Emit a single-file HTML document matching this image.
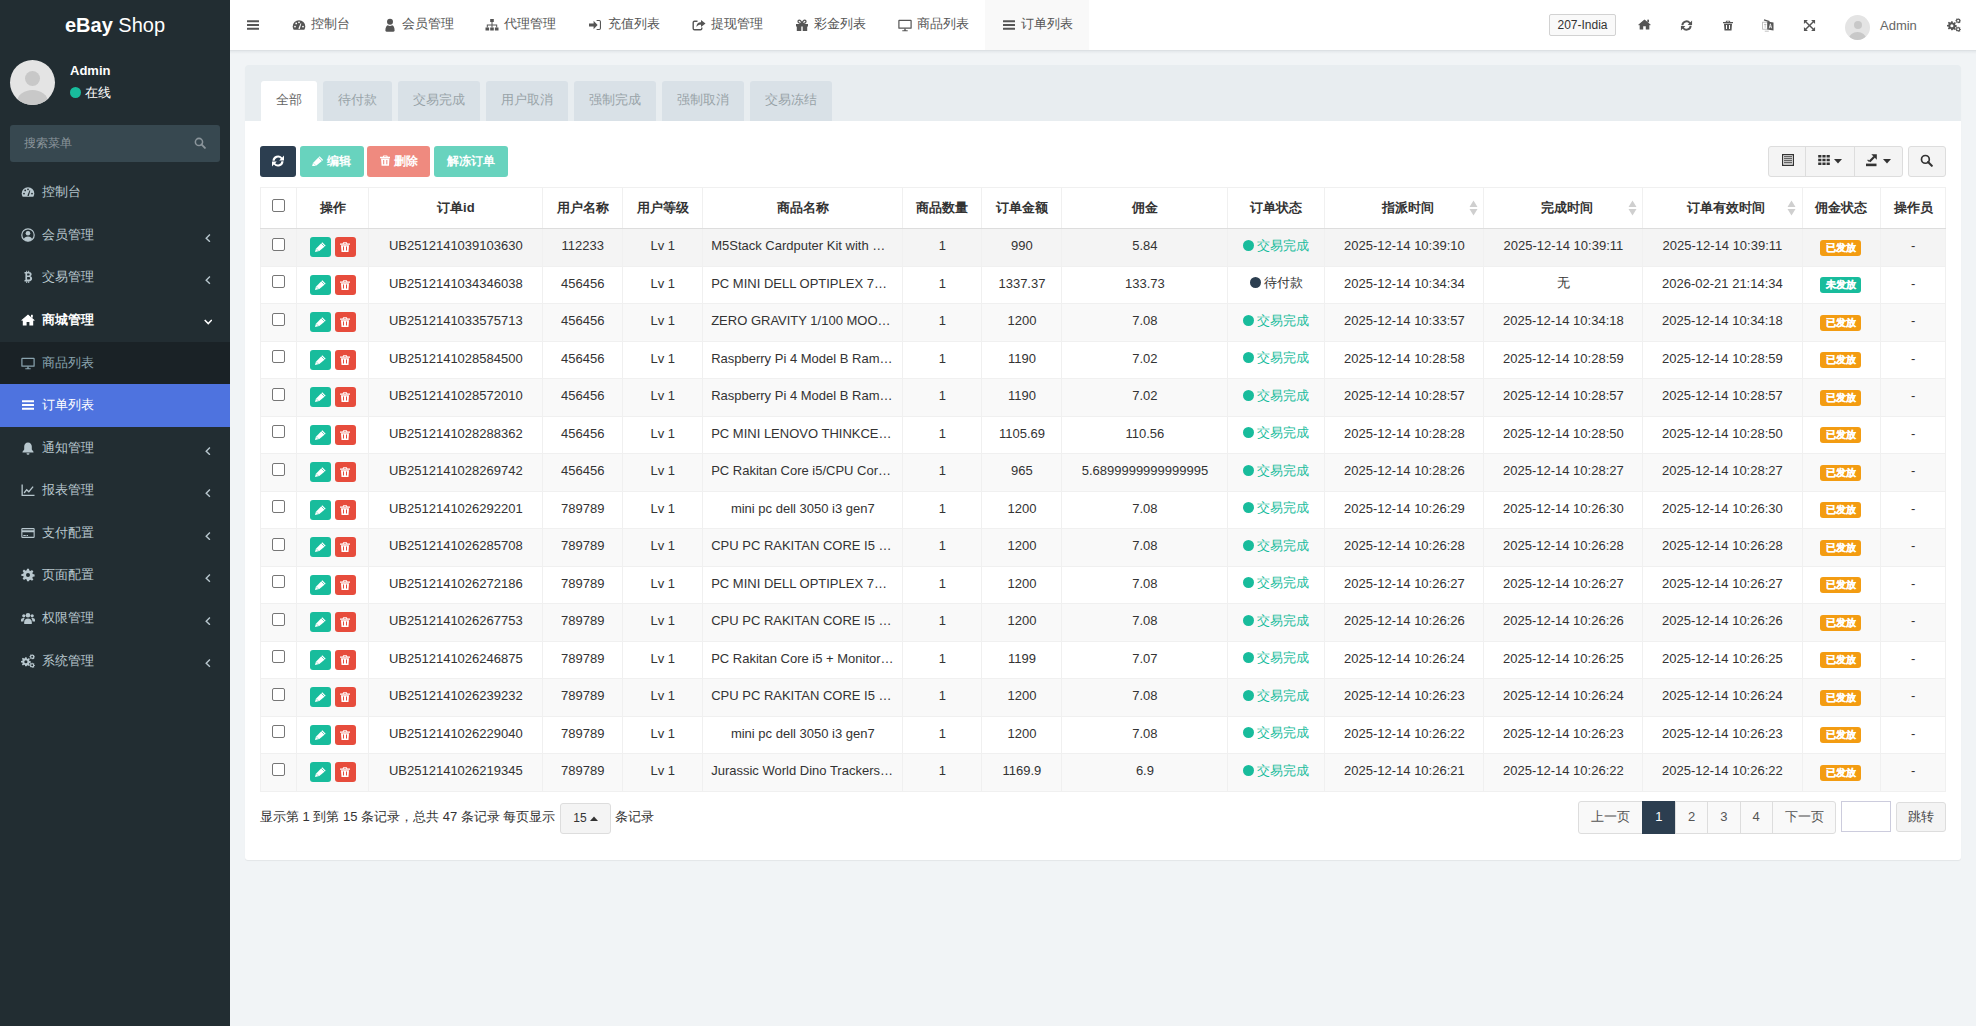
<!DOCTYPE html><html><head><meta charset="utf-8"><style>
*{box-sizing:border-box;margin:0;padding:0}
html,body{width:1976px;height:1026px;overflow:hidden}
body{background:#f1f4f6;font-family:"Liberation Sans",sans-serif;font-size:13px;color:#333;position:relative}
svg{display:block}
.hole{fill:#222d32}
#sb{position:absolute;left:0;top:0;width:230px;height:1026px;background:#222d32}
#logo{position:absolute;left:0;top:0;width:230px;height:50px;line-height:50px;text-align:center;color:#fff;font-size:20px}
.avatar{position:absolute;border-radius:50%;background:#e4e4e4;overflow:hidden}
.avatar i{position:absolute;border-radius:50%;background:#c8c8c8}
#uname{position:absolute;left:70px;top:63px;color:#fff;font-weight:bold;font-size:13px;line-height:16px}
#ustat{position:absolute;left:70px;top:85px;color:#fff;font-size:13px;line-height:16px}
#ustat b{display:inline-block;width:11px;height:11px;border-radius:50%;background:#18bc9c;vertical-align:-1px;margin-right:4px}
#sform{position:absolute;left:10px;top:125px;width:210px;height:37px;background:#374850;border-radius:3px}
#sform span{position:absolute;left:14px;top:0;line-height:36px;color:#8b959b;font-size:12px}
#sform .ic{position:absolute;left:184px;top:12px;color:#8b959b}
.mi{position:absolute;left:0;width:230px;height:42.57px;color:#b8c7ce}
.mi .ic{position:absolute;left:21px;top:14px}
.mi .tx{position:absolute;left:42px;top:0;line-height:42px;font-size:13px;white-space:nowrap}
.mi .ar{position:absolute;left:204.5px;top:19.8px}
.mi.sub{background:#1a2226;color:#8aa4af}
.mi.sub .hole{fill:#1a2226}
.mi.act{background:#4e73df;color:#fff}
.mi.act .hole{fill:#4e73df}
.mi.open{color:#fff}
.mi.open .tx{font-weight:bold}
#hd{position:absolute;left:230px;top:0;width:1746px;height:51px;background:#fff;border-bottom:1px solid #dde1e4}
.nv{position:absolute;top:0;height:50px;color:#555}
.nv .ic{position:absolute;top:17.5px}
.nv .tx{position:absolute;top:0;line-height:47px;font-size:13px;white-space:nowrap}
#hd .hole{fill:#fff}
.nv.act .hole{fill:#f9f9f9}
.nv.act{background:#f9f9f9}
.hole2{fill:#fff}
.hr{position:absolute;white-space:nowrap}
#site{background:#f9f9f9;border:1px solid #d2d2d2;border-radius:2px;font-size:12px;line-height:20px;text-align:center;color:#333}
.hic{position:absolute;color:#555}
.hic .hole{fill:#fff}
#panel{position:absolute;left:245px;top:65px;width:1716px;height:795px;background:#fff;border-radius:3px;box-shadow:0 1px 1px rgba(0,0,0,.06)}
#ph{position:absolute;left:0;top:0;width:1716px;height:56px;background:#e8edf0;border-radius:3px 3px 0 0}
.tab{position:absolute;top:81px;height:40px;line-height:38px;text-align:center;background:#d9e1e7;color:#98a3a7;border-radius:3px 3px 0 0;font-size:13px}
.tab.on{background:#fff;color:#666}
#panel > div{}
.btn{position:absolute;top:146px;height:31px;border-radius:3px;color:#fff;font-size:12px}
.btn span{position:absolute;top:7px;line-height:16px;font-weight:bold;white-space:nowrap}
.btn.dis{opacity:.65}
.rbtn{position:absolute;top:146px;height:31px;background:#f4f4f4;border:1px solid #ddd;border-radius:3px}
.rsep{position:absolute;top:146px;width:1px;height:31px;background:#ddd}
.rico{position:absolute;color:#333}
.rico .hole{fill:#f4f4f4}
#tb{position:absolute;left:260px;top:187px;width:1685.3px;border-collapse:collapse;table-layout:fixed}
#tb th{height:41px;border:1px solid #f0f0f0;border-bottom:1px solid #ddd;font-weight:bold;text-align:center;vertical-align:middle;position:relative;white-space:nowrap}
#tb td{height:37.5px;padding-bottom:3px;border:1px solid #f0f0f0;border-top:none;text-align:center;vertical-align:middle;white-space:nowrap}
#tb tbody tr:nth-child(odd) td{background:#f9f9f9}
#tb tbody tr:first-child td{background:#f4f4f4}
#tb th.sort{padding-left:7px}
#tb .srt{position:absolute;right:5.5px;top:12px}
#tb th .cb{top:-3.5px}
.cb{display:inline-block;width:13px;height:13px;border:1px solid #767676;border-radius:2px;background:#fff;vertical-align:middle;position:relative;top:-2.5px}
.xb{display:inline-block;width:21px;height:20px;border-radius:3px;color:#fff;vertical-align:middle;position:relative;top:1.5px}
.xb svg{position:absolute;left:5px;top:5px}
.pn .tr{text-align:left;padding-left:7.8px}
.st b{display:inline-block;width:11px;height:11px;border-radius:50%;vertical-align:-1px;margin-right:3px}
.st.ok{color:#18bc9c}.st.ok b{background:#18bc9c}
.st.wait{color:#333}.st.wait b{background:#2c3e50}
.lb{display:inline-block;padding:0 4.2px 0 6.2px;height:16px;line-height:16px;border-radius:3px;color:#fff;font-weight:bold;font-size:10px;position:relative;top:1.5px;left:-1px;-webkit-text-stroke:.3px #fff}
#ft{position:absolute;left:260px;top:809px;line-height:16px;white-space:nowrap}
#psel{position:absolute;left:560px;top:803px;width:51px;height:31px;background:#f4f4f4;border:1px solid #ddd;border-radius:3px;line-height:29px;text-align:center;font-size:12px}
#ft2{position:absolute;left:615px;top:809px;line-height:16px}
#pgw{position:absolute;top:801px;height:32.5px;border:1px solid #ddd;border-radius:3px;background:#f9f9f9}
.pg{position:absolute;top:801px;height:32.5px;line-height:31px;text-align:center;border-left:1px solid #ddd;color:#555}
.pg:first-of-type{border-left:none}
.pg.on{background:#2c3e50;color:#fff;border-color:#2c3e50}
#pin{position:absolute;left:1841px;top:801px;width:50px;height:30.5px;border:1px solid #ccd;background:#fff}
#pgo{position:absolute;left:1896px;top:802px;width:49.5px;height:30px;border:1px solid #ddd;border-radius:3px;background:#f4f4f4;line-height:28px;text-align:center;color:#444}

</style></head><body><div id="sb"><div id="logo"><b>eBay</b> Shop</div><div class="avatar" style="left:10px;top:60px;width:45px;height:45px"><i style="left:15px;top:11px;width:15px;height:15px"></i><i style="left:7px;top:30px;width:31px;height:24px"></i></div><div id="uname">Admin</div><div id="ustat"><b></b>在线</div><div id="sform"><span>搜索菜单</span><div class="ic"><svg width="12" height="12" viewBox="0 0 14 14" ><circle cx="5.8" cy="5.8" r="4.2" fill="none" stroke="currentColor" stroke-width="1.8"/><path d="M8.7 8.7l4 4" stroke="currentColor" stroke-width="2.2" stroke-linecap="round"/></svg></div></div><div class="mi " style="top:171.30px"><div class="ic"><svg width="14" height="14" viewBox="0 0 14 14" ><path d="M7 2.2A6.3 6.3 0 0 0 .7 8.5c0 1.3.4 2.4 1 3.3h10.6c.6-.9 1-2 1-3.3A6.3 6.3 0 0 0 7 2.2z" fill="currentColor"/><circle cx="3" cy="8.6" r=".9" fill="#fffe" class="hole"/><circle cx="4.2" cy="5.4" r=".9" class="hole"/><circle cx="7" cy="4.3" r=".9" class="hole"/><circle cx="11" cy="8.6" r=".9" class="hole"/><path d="M6.3 10.8 8.6 5.2 9.3 5.5 7.8 11z" class="hole"/></svg></div><div class="tx">控制台</div></div><div class="mi " style="top:213.87px"><div class="ic"><svg width="14" height="14" viewBox="0 0 14 14" ><circle cx="7" cy="7" r="6.2" fill="none" stroke="currentColor" stroke-width="1.2"/><circle cx="7" cy="5.3" r="2.3" fill="currentColor"/><path d="M2.8 11.3c.6-1.8 2-2.8 4.2-2.8s3.6 1 4.2 2.8A5.6 5.6 0 0 1 7 13.2a5.6 5.6 0 0 1-4.2-1.9z" fill="currentColor"/></svg></div><div class="tx">会员管理</div><div class="ar"><svg width="6" height="8.5" viewBox="0 0 6 8.5" ><path d="M4.9 .6 1.2 4.2 4.9 7.8" fill="none" stroke="currentColor" stroke-width="1.4"/></svg></div></div><div class="mi " style="top:256.44px"><div class="ic"><svg width="14" height="14" viewBox="0 0 14 14" ><path d="M3.5 2h4.3c1.8 0 2.8.9 2.8 2.3 0 .9-.5 1.6-1.3 1.9 1.1.3 1.8 1.1 1.8 2.3 0 1.8-1.2 2.9-3.2 2.9H3.5v-1.5h.9V3.5h-.9z M6.1 3.5v2.1h1.5c.7 0 1.1-.4 1.1-1.05S8.3 3.5 7.6 3.5z M6.1 7v2.5h1.7c.8 0 1.3-.5 1.3-1.25S8.6 7 7.8 7z" fill="currentColor" fill-rule="evenodd"/><path d="M5.2.8h1v1.5h-1zM7.2.8h1v1.5h-1zM5.2 11.2h1v1.8h-1zM7.2 11.2h1v1.8h-1z" fill="currentColor"/></svg></div><div class="tx">交易管理</div><div class="ar"><svg width="6" height="8.5" viewBox="0 0 6 8.5" ><path d="M4.9 .6 1.2 4.2 4.9 7.8" fill="none" stroke="currentColor" stroke-width="1.4"/></svg></div></div><div class="mi open" style="top:299.01px"><div class="ic"><svg width="14" height="14" viewBox="0 0 14 14" ><path d="M7 2.2 1.8 6.6V12.5h3.8V9h2.8v3.5h3.8V6.6z" fill="currentColor"/><path d="M.3 7.2 7 1.5l6.7 5.7-.8.9L7 3.1 1.1 8.1z" fill="currentColor"/><rect x="10" y="1.8" width="1.8" height="2.8" fill="currentColor"/></svg></div><div class="tx">商城管理</div><div class="ar" style="left:203.8px;top:20.3px"><svg width="8.5" height="6" viewBox="0 0 8.5 6"><path d="M.7 .9 4.25 4.6 7.8 .9" fill="none" stroke="currentColor" stroke-width="1.5"/></svg></div></div><div class="mi sub" style="top:341.58px"><div class="ic"><svg width="14" height="14" viewBox="0 0 14 14" ><path d="M1.2 1.8h11.6a.9.9 0 0 1 .9.9v7.2a.9.9 0 0 1-.9.9H1.2a.9.9 0 0 1-.9-.9V2.7a.9.9 0 0 1 .9-.9zm.3 1.2v6.6h11V3z" fill="currentColor"/><path d="M6.3 10.6h1.4v1.6h2v1H4.3v-1h2z" fill="currentColor"/></svg></div><div class="tx">商品列表</div></div><div class="mi act" style="top:384.15px"><div class="ic"><svg width="14" height="14" viewBox="0 0 14 14" ><rect x="1" y="2.3" width="12" height="2" rx=".3" fill="currentColor"/><rect x="1" y="6" width="12" height="2" rx=".3" fill="currentColor"/><rect x="1" y="9.7" width="12" height="2" rx=".3" fill="currentColor"/></svg></div><div class="tx">订单列表</div></div><div class="mi " style="top:426.72px"><div class="ic"><svg width="14" height="14" viewBox="0 0 14 14" ><path d="M7 1.5c-2.3 0-3.8 1.8-3.8 4v3L1.5 10.8v.7h11v-.7L10.8 8.5v-3c0-2.2-1.5-4-3.8-4z M5.5 12.2h3a1.5 1.5 0 0 1-3 0z" fill="currentColor"/></svg></div><div class="tx">通知管理</div><div class="ar"><svg width="6" height="8.5" viewBox="0 0 6 8.5" ><path d="M4.9 .6 1.2 4.2 4.9 7.8" fill="none" stroke="currentColor" stroke-width="1.4"/></svg></div></div><div class="mi " style="top:469.29px"><div class="ic"><svg width="14" height="14" viewBox="0 0 14 14" ><path d="M.5 1.5h1.3v10.2h11.7V13H.5z" fill="currentColor"/><path d="M2.6 9.6l3-3.8 2.2 2 3.8-4.6 1 .8-4.7 5.7-2.2-2-2.1 2.7z" fill="currentColor"/></svg></div><div class="tx">报表管理</div><div class="ar"><svg width="6" height="8.5" viewBox="0 0 6 8.5" ><path d="M4.9 .6 1.2 4.2 4.9 7.8" fill="none" stroke="currentColor" stroke-width="1.4"/></svg></div></div><div class="mi " style="top:511.86px"><div class="ic"><svg width="14" height="14" viewBox="0 0 14 14" ><path d="M1.5 2h11a1.2 1.2 0 0 1 1.2 1.2v7.6A1.2 1.2 0 0 1 12.5 12h-11A1.2 1.2 0 0 1 .3 10.8V3.2A1.2 1.2 0 0 1 1.5 2zm-.1 1.2v1.1h11.2V3.2zm0 3v4.6h11.2V6.2z M2.3 9h2.5v.9H2.3z M5.5 9h1.5v.9H5.5z" fill="currentColor" fill-rule="evenodd"/></svg></div><div class="tx">支付配置</div><div class="ar"><svg width="6" height="8.5" viewBox="0 0 6 8.5" ><path d="M4.9 .6 1.2 4.2 4.9 7.8" fill="none" stroke="currentColor" stroke-width="1.4"/></svg></div></div><div class="mi " style="top:554.43px"><div class="ic"><svg width="14" height="14" viewBox="0 0 14 14" ><path d="M6 .8h2l.3 1.8 1.2.5 1.5-1.1 1.4 1.4-1.1 1.5.5 1.2 1.8.3v2l-1.8.3-.5 1.2 1.1 1.5-1.4 1.4-1.5-1.1-1.2.5L8 13.2H6l-.3-1.8-1.2-.5-1.5 1.1-1.4-1.4 1.1-1.5-.5-1.2L.4 8V6l1.8-.3.5-1.2L1.6 3l1.4-1.4 1.5 1.1 1.2-.5z" fill="currentColor"/><circle cx="7" cy="7" r="2" class="hole"/></svg></div><div class="tx">页面配置</div><div class="ar"><svg width="6" height="8.5" viewBox="0 0 6 8.5" ><path d="M4.9 .6 1.2 4.2 4.9 7.8" fill="none" stroke="currentColor" stroke-width="1.4"/></svg></div></div><div class="mi " style="top:597.00px"><div class="ic"><svg width="14" height="14" viewBox="0 0 14 14" ><circle cx="7" cy="4.2" r="2.3" fill="currentColor"/><circle cx="2.8" cy="4.8" r="1.6" fill="currentColor"/><circle cx="11.2" cy="4.8" r="1.6" fill="currentColor"/><path d="M3.2 13v-1.8c0-2.2 1.5-3.6 3.8-3.6s3.8 1.4 3.8 3.6V13z" fill="currentColor"/><path d="M0 10.5V9c0-1.2.9-2 2.4-2 .5 0 1 .2 1.3.4-.8.7-1.2 1.8-1.3 3.1z M14 10.5V9c0-1.2-.9-2-2.4-2-.5 0-1 .2-1.3.4.8.7 1.2 1.8 1.3 3.1z" fill="currentColor"/></svg></div><div class="tx">权限管理</div><div class="ar"><svg width="6" height="8.5" viewBox="0 0 6 8.5" ><path d="M4.9 .6 1.2 4.2 4.9 7.8" fill="none" stroke="currentColor" stroke-width="1.4"/></svg></div></div><div class="mi " style="top:639.57px"><div class="ic"><svg width="14" height="14" viewBox="0 0 14 14" ><g transform="translate(-.3 2.6) scale(.74)"><path d="M6 .8h2l.3 1.8 1.2.5 1.5-1.1 1.4 1.4-1.1 1.5.5 1.2 1.8.3v2l-1.8.3-.5 1.2 1.1 1.5-1.4 1.4-1.5-1.1-1.2.5L8 13.2H6l-.3-1.8-1.2-.5-1.5 1.1-1.4-1.4 1.1-1.5-.5-1.2L.4 8V6l1.8-.3.5-1.2L1.6 3l1.4-1.4 1.5 1.1 1.2-.5z" fill="currentColor"/><circle cx="7" cy="7" r="2.1" class="hole"/></g><g transform="translate(8.2 -.2) scale(.42)"><path d="M6 .8h2l.3 1.8 1.2.5 1.5-1.1 1.4 1.4-1.1 1.5.5 1.2 1.8.3v2l-1.8.3-.5 1.2 1.1 1.5-1.4 1.4-1.5-1.1-1.2.5L8 13.2H6l-.3-1.8-1.2-.5-1.5 1.1-1.4-1.4 1.1-1.5-.5-1.2L.4 8V6l1.8-.3.5-1.2L1.6 3l1.4-1.4 1.5 1.1 1.2-.5z" fill="currentColor"/><circle cx="7" cy="7" r="2.4" class="hole"/></g><g transform="translate(8.2 8.3) scale(.42)"><path d="M6 .8h2l.3 1.8 1.2.5 1.5-1.1 1.4 1.4-1.1 1.5.5 1.2 1.8.3v2l-1.8.3-.5 1.2 1.1 1.5-1.4 1.4-1.5-1.1-1.2.5L8 13.2H6l-.3-1.8-1.2-.5-1.5 1.1-1.4-1.4 1.1-1.5-.5-1.2L.4 8V6l1.8-.3.5-1.2L1.6 3l1.4-1.4 1.5 1.1 1.2-.5z" fill="currentColor"/><circle cx="7" cy="7" r="2.4" class="hole"/></g></svg></div><div class="tx">系统管理</div><div class="ar"><svg width="6" height="8.5" viewBox="0 0 6 8.5" ><path d="M4.9 .6 1.2 4.2 4.9 7.8" fill="none" stroke="currentColor" stroke-width="1.4"/></svg></div></div></div><div style="position:absolute;left:230px;top:51px;width:1746px;height:3px;background:linear-gradient(#e4e8eb,#f1f4f6)"></div><div id="hd"><div class="nv" style="left:0;width:45px"><div class="ic" style="left:16px;top:18px"><svg width="14" height="14" viewBox="0 0 14 14" ><rect x="1" y="2.3" width="12" height="2" rx=".3" fill="currentColor"/><rect x="1" y="6" width="12" height="2" rx=".3" fill="currentColor"/><rect x="1" y="9.7" width="12" height="2" rx=".3" fill="currentColor"/></svg></div></div><div class="nv" style="left:62.0px;width:14px"><div class="ic" style="left:0"><svg width="14" height="14" viewBox="0 0 14 14" ><path d="M7 2.2A6.3 6.3 0 0 0 .7 8.5c0 1.3.4 2.4 1 3.3h10.6c.6-.9 1-2 1-3.3A6.3 6.3 0 0 0 7 2.2z" fill="currentColor"/><circle cx="3" cy="8.6" r=".9" fill="#fffe" class="hole"/><circle cx="4.2" cy="5.4" r=".9" class="hole"/><circle cx="7" cy="4.3" r=".9" class="hole"/><circle cx="11" cy="8.6" r=".9" class="hole"/><path d="M6.3 10.8 8.6 5.2 9.3 5.5 7.8 11z" class="hole"/></svg></div></div><div class="nv" style="left:81.0px"><div class="tx">控制台</div></div><div class="nv" style="left:152.5px;width:14px"><div class="ic" style="left:0"><svg width="14" height="14" viewBox="0 0 14 14" ><circle cx="7" cy="3.8" r="3" fill="currentColor"/><path d="M2.4 12.6c0-3 .9-5 2.5-5.3.6.5 1.3.8 2.1.8s1.5-.3 2.1-.8c1.6.3 2.5 2.3 2.5 5.3 0 .7-.5 1.2-1.2 1.2H3.6c-.7 0-1.2-.5-1.2-1.2z" fill="currentColor"/></svg></div></div><div class="nv" style="left:171.5px"><div class="tx">会员管理</div></div><div class="nv" style="left:255.2px;width:14px"><div class="ic" style="left:0"><svg width="14" height="14" viewBox="0 0 14 14" ><rect x="5.2" y="1" width="3.6" height="3" fill="currentColor"/><rect x="0.5" y="9.5" width="3.6" height="3" fill="currentColor"/><rect x="5.2" y="9.5" width="3.6" height="3" fill="currentColor"/><rect x="9.9" y="9.5" width="3.6" height="3" fill="currentColor"/><path d="M6.5 4h1v2.5h4.7v3h-1v-2h-3.7v2h-1v-2H2.8v2h-1v-3h4.7z" fill="currentColor"/></svg></div></div><div class="nv" style="left:274.2px"><div class="tx">代理管理</div></div><div class="nv" style="left:358.7px;width:14px"><div class="ic" style="left:0;top:19.5px"><svg width="12" height="10" viewBox="0 0 12 10"><path d="M0 3.6h4.6V.8L8.6 5 4.6 9.2V6.4H0z" fill="currentColor"/><path d="M7.6 0h2.6A1.8 1.8 0 0 1 12 1.8v6.4A1.8 1.8 0 0 1 10.2 10H7.6V8.9h2.6a.7.7 0 0 0 .7-.7V1.8a.7.7 0 0 0-.7-.7H7.6z" fill="currentColor"/></svg></div></div><div class="nv" style="left:377.7px"><div class="tx">充值列表</div></div><div class="nv" style="left:461.8px;width:14px"><div class="ic" style="left:0"><svg width="14" height="14" viewBox="0 0 14 14" ><path d="M5.5 2.5h-3a2 2 0 0 0-2 2v6a2 2 0 0 0 2 2h6a2 2 0 0 0 2-2v-1h-1.4v1a.6.6 0 0 1-.6.6h-6a.6.6 0 0 1-.6-.6v-6a.6.6 0 0 1 .6-.6h3z" fill="currentColor"/><path d="M9 2v2.2C6.5 4.2 4.5 5.5 4.5 9c1-1.8 2.3-2.3 4.5-2.3V9l4.5-3.5z" fill="currentColor"/></svg></div></div><div class="nv" style="left:480.8px"><div class="tx">提现管理</div></div><div class="nv" style="left:565.0px;width:14px"><div class="ic" style="left:0"><svg width="14" height="14" viewBox="0 0 14 14" ><path d="M1 6h12v2.5H1z M1.8 8.5h4.5V13H1.8z M7.7 8.5h4.5V13H7.7z" fill="currentColor"/><path d="M6.3 6h1.4v7H6.3z" fill="#fff" opacity="0"/><path d="M7 5.5C5.5 5.5 3 5.3 3 3.6 3 2.7 3.6 2.2 4.3 2.2 5.6 2.2 6.5 4 7 5.5 7.5 4 8.4 2.2 9.7 2.2c.7 0 1.3.5 1.3 1.4 0 1.7-2.5 1.9-4 1.9z" fill="none" stroke="currentColor" stroke-width="1.3"/></svg></div></div><div class="nv" style="left:584.0px"><div class="tx">彩金列表</div></div><div class="nv" style="left:668.0px;width:14px"><div class="ic" style="left:0"><svg width="14" height="14" viewBox="0 0 14 14" ><path d="M1.2 1.8h11.6a.9.9 0 0 1 .9.9v7.2a.9.9 0 0 1-.9.9H1.2a.9.9 0 0 1-.9-.9V2.7a.9.9 0 0 1 .9-.9zm.3 1.2v6.6h11V3z" fill="currentColor"/><path d="M6.3 10.6h1.4v1.6h2v1H4.3v-1h2z" fill="currentColor"/></svg></div></div><div class="nv" style="left:687.0px"><div class="tx">商品列表</div></div><div class="nv act" style="left:755px;width:104px"></div><div class="nv" style="left:772.0px;width:14px"><div class="ic" style="left:0"><svg width="14" height="14" viewBox="0 0 14 14" ><rect x="1" y="2.3" width="12" height="2" rx=".3" fill="currentColor"/><rect x="1" y="6" width="12" height="2" rx=".3" fill="currentColor"/><rect x="1" y="9.7" width="12" height="2" rx=".3" fill="currentColor"/></svg></div></div><div class="nv" style="left:791.0px"><div class="tx">订单列表</div></div></div><div class="hr" id="site" style="left:1549px;top:14px;width:67px;height:22px">207-India</div><div class="hic" style="left:1638px;top:18px"><svg width="13" height="13" viewBox="0 0 14 14" ><path d="M7 2.2 1.8 6.6V12.5h3.8V9h2.8v3.5h3.8V6.6z" fill="currentColor"/><path d="M.3 7.2 7 1.5l6.7 5.7-.8.9L7 3.1 1.1 8.1z" fill="currentColor"/><rect x="10" y="1.8" width="1.8" height="2.8" fill="currentColor"/></svg></div><div class="hic" style="left:1680px;top:19px"><svg width="13" height="13" viewBox="-1 -1 14 14"><path d="M.5 5.8A5.5 5.5 0 0 1 10.2 2.4L12 .6V5.4H7.2L8.8 3.8A3.5 3.5 0 0 0 2.6 5.8Z M11.5 6.2A5.5 5.5 0 0 1 1.8 9.6L0 11.4V6.6H4.8L3.2 8.2A3.5 3.5 0 0 0 9.4 6.2Z" fill="currentColor"/></svg></div><div class="hic" style="left:1723px;top:19.5px"><svg width="10" height="11" viewBox="0 0 10 10"><path d="M3.2 .2h3.6l.6 1.3H10v1.3H0V1.5h2.6z" fill="currentColor"/><path d="M4 .9h2l.3.6H3.7z" fill="#fff"/><path d="M1 3.2h8l-.5 6.8H1.5z" fill="currentColor"/><path d="M3 4.6h1v3.9H3zM6 4.6h1v3.9H6z" fill="#fff"/></svg></div><div class="hic" style="left:1762px;top:18.5px"><svg width="12" height="13" viewBox="0 0 12 13"><rect x=".6" y="3.2" width="5" height="7" fill="none" stroke="currentColor" stroke-width=".8" opacity=".45"/><path d="M2 .9 7.5 2.6" stroke="currentColor" stroke-width="1.3"/><path d="M5.3 2.4 11.5 3.6V11.6L5.3 10.4z" fill="currentColor"/><path d="M7.2 9.3 8.4 4.8 9.6 9.3M7.7 7.8h1.5" stroke="#fff" stroke-width=".8" fill="none"/><path d="M2.8 12.2h4" stroke="currentColor" stroke-width=".8" opacity=".45"/><path d="M2 5.5h2.4M3.2 4.8v4" stroke="currentColor" stroke-width=".6" opacity=".5"/></svg></div><div class="hic" style="left:1803px;top:18.5px"><svg width="13" height="13" viewBox="0 0 14 14" ><path d="M1 1h4.3L3.7 2.6 7 5.9 10.3 2.6 8.7 1H13v4.3l-1.6-1.6L8.1 7l3.3 3.3L13 8.7V13H8.7l1.6-1.6L7 8.1 3.7 11.4 5.3 13H1V8.7l1.6 1.6L5.9 7 2.6 3.7 1 5.3z" fill="currentColor"/></svg></div><div class="avatar" style="left:1845px;top:15px;width:25px;height:25px"><i style="left:8.5px;top:6px;width:8px;height:8px"></i><i style="left:4px;top:17px;width:17px;height:13px"></i></div><div class="hr" style="left:1880px;top:18px;line-height:16px;font-size:13px;color:#666">Admin</div><div class="hic" style="left:1947px;top:18px"><svg width="14" height="14" viewBox="0 0 14 14" ><g transform="translate(-.3 2.6) scale(.74)"><path d="M6 .8h2l.3 1.8 1.2.5 1.5-1.1 1.4 1.4-1.1 1.5.5 1.2 1.8.3v2l-1.8.3-.5 1.2 1.1 1.5-1.4 1.4-1.5-1.1-1.2.5L8 13.2H6l-.3-1.8-1.2-.5-1.5 1.1-1.4-1.4 1.1-1.5-.5-1.2L.4 8V6l1.8-.3.5-1.2L1.6 3l1.4-1.4 1.5 1.1 1.2-.5z" fill="currentColor"/><circle cx="7" cy="7" r="2.1" class="hole"/></g><g transform="translate(8.2 -.2) scale(.42)"><path d="M6 .8h2l.3 1.8 1.2.5 1.5-1.1 1.4 1.4-1.1 1.5.5 1.2 1.8.3v2l-1.8.3-.5 1.2 1.1 1.5-1.4 1.4-1.5-1.1-1.2.5L8 13.2H6l-.3-1.8-1.2-.5-1.5 1.1-1.4-1.4 1.1-1.5-.5-1.2L.4 8V6l1.8-.3.5-1.2L1.6 3l1.4-1.4 1.5 1.1 1.2-.5z" fill="currentColor"/><circle cx="7" cy="7" r="2.4" class="hole"/></g><g transform="translate(8.2 8.3) scale(.42)"><path d="M6 .8h2l.3 1.8 1.2.5 1.5-1.1 1.4 1.4-1.1 1.5.5 1.2 1.8.3v2l-1.8.3-.5 1.2 1.1 1.5-1.4 1.4-1.5-1.1-1.2.5L8 13.2H6l-.3-1.8-1.2-.5-1.5 1.1-1.4-1.4 1.1-1.5-.5-1.2L.4 8V6l1.8-.3.5-1.2L1.6 3l1.4-1.4 1.5 1.1 1.2-.5z" fill="currentColor"/><circle cx="7" cy="7" r="2.4" class="hole"/></g></svg></div><div id="panel"><div id="ph"></div></div><div class="tab on" style="left:261px;width:56px">全部</div><div class="tab" style="left:323px;width:69px">待付款</div><div class="tab" style="left:398px;width:82px">交易完成</div><div class="tab" style="left:486px;width:82px">用户取消</div><div class="tab" style="left:574px;width:82px">强制完成</div><div class="tab" style="left:662px;width:82px">强制取消</div><div class="tab" style="left:750px;width:82px">交易冻结</div><div class="btn" style="left:260px;width:36px;background:#2c3e50"><div style="position:absolute;left:12.3px;top:9px"><svg width="12" height="12" viewBox="0 0 12 12"><path d="M.5 5.8A5.5 5.5 0 0 1 10.2 2.4L12 .6V5.4H7.2L8.8 3.8A3.5 3.5 0 0 0 2.6 5.8Z M11.5 6.2A5.5 5.5 0 0 1 1.8 9.6L0 11.4V6.6H4.8L3.2 8.2A3.5 3.5 0 0 0 9.4 6.2Z" fill="currentColor"/></svg></div></div><div class="btn dis" style="left:300px;width:64px;background:#18bc9c"><div style="position:absolute;left:12px;top:9.5px"><svg width="11.5" height="10.5" viewBox="0 0 11 10"><path d="M0 10 .9 6.7 7.3.3 10.7 3.7 4.3 9.1z" fill="currentColor"/><path d="M6.3 1.3 9.7 4.7" stroke="#18bc9c" stroke-width=".7"/><path d="M1.3 6.8 3.6 9.1" stroke="#18bc9c" stroke-width=".6" opacity=".7"/></svg></div><span style="left:26.5px">编辑</span></div><div class="btn dis" style="left:367px;width:63px;background:#e74c3c"><div style="position:absolute;left:12.8px;top:9px"><svg width="10.5" height="11" viewBox="0 0 10 10"><path d="M3.2 .2h3.6l.6 1.3H10v1.3H0V1.5h2.6z" fill="currentColor"/><path d="M4 .9h2l.3.6H3.7z" fill="#e74c3c"/><path d="M1 3.2h8l-.5 6.8H1.5z" fill="currentColor"/><path d="M3 4.6h1v3.9H3zM6 4.6h1v3.9H6z" fill="#e74c3c"/></svg></div><span style="left:27px">删除</span></div><div class="btn dis" style="left:434px;width:74px;background:#18bc9c"><span style="left:13px">解冻订单</span></div><div class="rbtn" style="left:1768px;width:135px"></div><div class="rsep" style="left:1805px"></div><div class="rsep" style="left:1854px"></div><div class="rico" style="left:1781px;top:153px"><svg width="14" height="14" viewBox="0 0 14 14" ><path d="M1 1h12v12H1z M2.2 2.2v9.6h9.6V2.2z" fill="currentColor" fill-rule="evenodd"/><path d="M3 3.2h8v1H3zM3 5.2h8v1H3zM3 7.2h8v1H3zM3 9.2h8v1H3z" fill="currentColor"/></svg></div><div class="rico" style="left:1817px;top:153px"><svg width="14" height="14" viewBox="0 0 14 14" ><path d="M1.2 2h3.2v2.6H1.2zM5.4 2h3.2v2.6H5.4zM9.6 2h3.2v2.6H9.6zM1.2 5.7h3.2v2.6H1.2zM5.4 5.7h3.2v2.6H5.4zM9.6 5.7h3.2v2.6H9.6zM1.2 9.4h3.2V12H1.2zM5.4 9.4h3.2V12H5.4zM9.6 9.4h3.2V12H9.6z" fill="currentColor"/></svg></div><div class="rico" style="left:1834px;top:159px"><svg width="8" height="5" viewBox="0 0 8 5" ><path d="M0 0h8L4 4.5z" fill="currentColor"/></svg></div><div class="rico" style="left:1865px;top:153px"><svg width="14" height="14" viewBox="0 0 14 14" ><rect x="1" y="10.6" width="10.5" height="2.6" fill="currentColor"/><path d="M6.3 1.2h5.5v5.5z" fill="currentColor"/><path d="M9.3 3.8 4.6 8.5" stroke="currentColor" stroke-width="2.2"/><path d="M2.6 6.8 4.4 8.6" stroke="currentColor" stroke-width="1.1"/></svg></div><div class="rico" style="left:1882.5px;top:159px"><svg width="8" height="5" viewBox="0 0 8 5" ><path d="M0 0h8L4 4.5z" fill="currentColor"/></svg></div><div class="rbtn" style="left:1908px;width:38px"></div><div class="rico" style="left:1920px;top:154px"><svg width="13" height="13" viewBox="0 0 14 14" ><circle cx="5.8" cy="5.8" r="4.2" fill="none" stroke="currentColor" stroke-width="1.8"/><path d="M8.7 8.7l4 4" stroke="currentColor" stroke-width="2.2" stroke-linecap="round"/></svg></div><table id="tb"><colgroup><col style="width:36.4px"><col style="width:72.0px"><col style="width:173.9px"><col style="width:79.9px"><col style="width:80.2px"><col style="width:199.9px"><col style="width:79.2px"><col style="width:80.0px"><col style="width:166.0px"><col style="width:96.9px"><col style="width:159.1px"><col style="width:158.9px"><col style="width:159.2px"><col style="width:78.9px"><col style="width:64.8px"></colgroup><thead><tr><th><i class="cb"></i></th><th>操作</th><th>订单id</th><th>用户名称</th><th>用户等级</th><th>商品名称</th><th>商品数量</th><th>订单金额</th><th>佣金</th><th>订单状态</th><th class="sort">指派时间<svg class="srt" width="9" height="16" viewBox="0 0 9 16"><path d="M4.5 .5 8.5 7H.5z M4.5 15.5 .5 9h8z" fill="#cfcfcf"/></svg></th><th class="sort">完成时间<svg class="srt" width="9" height="16" viewBox="0 0 9 16"><path d="M4.5 .5 8.5 7H.5z M4.5 15.5 .5 9h8z" fill="#cfcfcf"/></svg></th><th class="sort">订单有效时间<svg class="srt" width="9" height="16" viewBox="0 0 9 16"><path d="M4.5 .5 8.5 7H.5z M4.5 15.5 .5 9h8z" fill="#cfcfcf"/></svg></th><th>佣金状态</th><th>操作员</th></tr></thead><tbody><tr><td><i class="cb"></i></td><td><span class="xb" style="background:#18bc9c"><svg width="11" height="10" viewBox="0 0 11 10"><path d="M0 10 .9 6.7 7.3.3 10.7 3.7 4.3 9.1z" fill="currentColor"/><path d="M6.3 1.3 9.7 4.7" stroke="#18bc9c" stroke-width=".7"/><path d="M1.3 6.8 3.6 9.1" stroke="#18bc9c" stroke-width=".6" opacity=".7"/></svg></span><span class="xb" style="background:#e74c3c;margin-left:4px"><svg width="10" height="10" viewBox="0 0 10 10"><path d="M3.2 .2h3.6l.6 1.3H10v1.3H0V1.5h2.6z" fill="currentColor"/><path d="M4 .9h2l.3.6H3.7z" fill="#e74c3c"/><path d="M1 3.2h8l-.5 6.8H1.5z" fill="currentColor"/><path d="M3 4.6h1v3.9H3zM6 4.6h1v3.9H6z" fill="#e74c3c"/></svg></span></td><td>UB2512141039103630</td><td>112233</td><td>Lv 1</td><td class="pn"><div class="tr">M5Stack Cardputer Kit with …</div></td><td>1</td><td>990</td><td>5.84</td><td class="st ok"><b></b>交易完成</td><td>2025-12-14 10:39:10</td><td>2025-12-14 10:39:11</td><td>2025-12-14 10:39:11</td><td><span class="lb" style="background:#f39c12">已发放</span></td><td>-</td></tr><tr><td><i class="cb"></i></td><td><span class="xb" style="background:#18bc9c"><svg width="11" height="10" viewBox="0 0 11 10"><path d="M0 10 .9 6.7 7.3.3 10.7 3.7 4.3 9.1z" fill="currentColor"/><path d="M6.3 1.3 9.7 4.7" stroke="#18bc9c" stroke-width=".7"/><path d="M1.3 6.8 3.6 9.1" stroke="#18bc9c" stroke-width=".6" opacity=".7"/></svg></span><span class="xb" style="background:#e74c3c;margin-left:4px"><svg width="10" height="10" viewBox="0 0 10 10"><path d="M3.2 .2h3.6l.6 1.3H10v1.3H0V1.5h2.6z" fill="currentColor"/><path d="M4 .9h2l.3.6H3.7z" fill="#e74c3c"/><path d="M1 3.2h8l-.5 6.8H1.5z" fill="currentColor"/><path d="M3 4.6h1v3.9H3zM6 4.6h1v3.9H6z" fill="#e74c3c"/></svg></span></td><td>UB2512141034346038</td><td>456456</td><td>Lv 1</td><td class="pn"><div class="tr">PC MINI DELL OPTIPLEX 7…</div></td><td>1</td><td>1337.37</td><td>133.73</td><td class="st wait"><b></b>待付款</td><td>2025-12-14 10:34:34</td><td>无</td><td>2026-02-21 21:14:34</td><td><span class="lb" style="background:#18bc9c">未发放</span></td><td>-</td></tr><tr><td><i class="cb"></i></td><td><span class="xb" style="background:#18bc9c"><svg width="11" height="10" viewBox="0 0 11 10"><path d="M0 10 .9 6.7 7.3.3 10.7 3.7 4.3 9.1z" fill="currentColor"/><path d="M6.3 1.3 9.7 4.7" stroke="#18bc9c" stroke-width=".7"/><path d="M1.3 6.8 3.6 9.1" stroke="#18bc9c" stroke-width=".6" opacity=".7"/></svg></span><span class="xb" style="background:#e74c3c;margin-left:4px"><svg width="10" height="10" viewBox="0 0 10 10"><path d="M3.2 .2h3.6l.6 1.3H10v1.3H0V1.5h2.6z" fill="currentColor"/><path d="M4 .9h2l.3.6H3.7z" fill="#e74c3c"/><path d="M1 3.2h8l-.5 6.8H1.5z" fill="currentColor"/><path d="M3 4.6h1v3.9H3zM6 4.6h1v3.9H6z" fill="#e74c3c"/></svg></span></td><td>UB2512141033575713</td><td>456456</td><td>Lv 1</td><td class="pn"><div class="tr">ZERO GRAVITY 1/100 MOO…</div></td><td>1</td><td>1200</td><td>7.08</td><td class="st ok"><b></b>交易完成</td><td>2025-12-14 10:33:57</td><td>2025-12-14 10:34:18</td><td>2025-12-14 10:34:18</td><td><span class="lb" style="background:#f39c12">已发放</span></td><td>-</td></tr><tr><td><i class="cb"></i></td><td><span class="xb" style="background:#18bc9c"><svg width="11" height="10" viewBox="0 0 11 10"><path d="M0 10 .9 6.7 7.3.3 10.7 3.7 4.3 9.1z" fill="currentColor"/><path d="M6.3 1.3 9.7 4.7" stroke="#18bc9c" stroke-width=".7"/><path d="M1.3 6.8 3.6 9.1" stroke="#18bc9c" stroke-width=".6" opacity=".7"/></svg></span><span class="xb" style="background:#e74c3c;margin-left:4px"><svg width="10" height="10" viewBox="0 0 10 10"><path d="M3.2 .2h3.6l.6 1.3H10v1.3H0V1.5h2.6z" fill="currentColor"/><path d="M4 .9h2l.3.6H3.7z" fill="#e74c3c"/><path d="M1 3.2h8l-.5 6.8H1.5z" fill="currentColor"/><path d="M3 4.6h1v3.9H3zM6 4.6h1v3.9H6z" fill="#e74c3c"/></svg></span></td><td>UB2512141028584500</td><td>456456</td><td>Lv 1</td><td class="pn"><div class="tr">Raspberry Pi 4 Model B Ram…</div></td><td>1</td><td>1190</td><td>7.02</td><td class="st ok"><b></b>交易完成</td><td>2025-12-14 10:28:58</td><td>2025-12-14 10:28:59</td><td>2025-12-14 10:28:59</td><td><span class="lb" style="background:#f39c12">已发放</span></td><td>-</td></tr><tr><td><i class="cb"></i></td><td><span class="xb" style="background:#18bc9c"><svg width="11" height="10" viewBox="0 0 11 10"><path d="M0 10 .9 6.7 7.3.3 10.7 3.7 4.3 9.1z" fill="currentColor"/><path d="M6.3 1.3 9.7 4.7" stroke="#18bc9c" stroke-width=".7"/><path d="M1.3 6.8 3.6 9.1" stroke="#18bc9c" stroke-width=".6" opacity=".7"/></svg></span><span class="xb" style="background:#e74c3c;margin-left:4px"><svg width="10" height="10" viewBox="0 0 10 10"><path d="M3.2 .2h3.6l.6 1.3H10v1.3H0V1.5h2.6z" fill="currentColor"/><path d="M4 .9h2l.3.6H3.7z" fill="#e74c3c"/><path d="M1 3.2h8l-.5 6.8H1.5z" fill="currentColor"/><path d="M3 4.6h1v3.9H3zM6 4.6h1v3.9H6z" fill="#e74c3c"/></svg></span></td><td>UB2512141028572010</td><td>456456</td><td>Lv 1</td><td class="pn"><div class="tr">Raspberry Pi 4 Model B Ram…</div></td><td>1</td><td>1190</td><td>7.02</td><td class="st ok"><b></b>交易完成</td><td>2025-12-14 10:28:57</td><td>2025-12-14 10:28:57</td><td>2025-12-14 10:28:57</td><td><span class="lb" style="background:#f39c12">已发放</span></td><td>-</td></tr><tr><td><i class="cb"></i></td><td><span class="xb" style="background:#18bc9c"><svg width="11" height="10" viewBox="0 0 11 10"><path d="M0 10 .9 6.7 7.3.3 10.7 3.7 4.3 9.1z" fill="currentColor"/><path d="M6.3 1.3 9.7 4.7" stroke="#18bc9c" stroke-width=".7"/><path d="M1.3 6.8 3.6 9.1" stroke="#18bc9c" stroke-width=".6" opacity=".7"/></svg></span><span class="xb" style="background:#e74c3c;margin-left:4px"><svg width="10" height="10" viewBox="0 0 10 10"><path d="M3.2 .2h3.6l.6 1.3H10v1.3H0V1.5h2.6z" fill="currentColor"/><path d="M4 .9h2l.3.6H3.7z" fill="#e74c3c"/><path d="M1 3.2h8l-.5 6.8H1.5z" fill="currentColor"/><path d="M3 4.6h1v3.9H3zM6 4.6h1v3.9H6z" fill="#e74c3c"/></svg></span></td><td>UB2512141028288362</td><td>456456</td><td>Lv 1</td><td class="pn"><div class="tr">PC MINI LENOVO THINKCE…</div></td><td>1</td><td>1105.69</td><td>110.56</td><td class="st ok"><b></b>交易完成</td><td>2025-12-14 10:28:28</td><td>2025-12-14 10:28:50</td><td>2025-12-14 10:28:50</td><td><span class="lb" style="background:#f39c12">已发放</span></td><td>-</td></tr><tr><td><i class="cb"></i></td><td><span class="xb" style="background:#18bc9c"><svg width="11" height="10" viewBox="0 0 11 10"><path d="M0 10 .9 6.7 7.3.3 10.7 3.7 4.3 9.1z" fill="currentColor"/><path d="M6.3 1.3 9.7 4.7" stroke="#18bc9c" stroke-width=".7"/><path d="M1.3 6.8 3.6 9.1" stroke="#18bc9c" stroke-width=".6" opacity=".7"/></svg></span><span class="xb" style="background:#e74c3c;margin-left:4px"><svg width="10" height="10" viewBox="0 0 10 10"><path d="M3.2 .2h3.6l.6 1.3H10v1.3H0V1.5h2.6z" fill="currentColor"/><path d="M4 .9h2l.3.6H3.7z" fill="#e74c3c"/><path d="M1 3.2h8l-.5 6.8H1.5z" fill="currentColor"/><path d="M3 4.6h1v3.9H3zM6 4.6h1v3.9H6z" fill="#e74c3c"/></svg></span></td><td>UB2512141028269742</td><td>456456</td><td>Lv 1</td><td class="pn"><div class="tr">PC Rakitan Core i5/CPU Cor…</div></td><td>1</td><td>965</td><td>5.6899999999999995</td><td class="st ok"><b></b>交易完成</td><td>2025-12-14 10:28:26</td><td>2025-12-14 10:28:27</td><td>2025-12-14 10:28:27</td><td><span class="lb" style="background:#f39c12">已发放</span></td><td>-</td></tr><tr><td><i class="cb"></i></td><td><span class="xb" style="background:#18bc9c"><svg width="11" height="10" viewBox="0 0 11 10"><path d="M0 10 .9 6.7 7.3.3 10.7 3.7 4.3 9.1z" fill="currentColor"/><path d="M6.3 1.3 9.7 4.7" stroke="#18bc9c" stroke-width=".7"/><path d="M1.3 6.8 3.6 9.1" stroke="#18bc9c" stroke-width=".6" opacity=".7"/></svg></span><span class="xb" style="background:#e74c3c;margin-left:4px"><svg width="10" height="10" viewBox="0 0 10 10"><path d="M3.2 .2h3.6l.6 1.3H10v1.3H0V1.5h2.6z" fill="currentColor"/><path d="M4 .9h2l.3.6H3.7z" fill="#e74c3c"/><path d="M1 3.2h8l-.5 6.8H1.5z" fill="currentColor"/><path d="M3 4.6h1v3.9H3zM6 4.6h1v3.9H6z" fill="#e74c3c"/></svg></span></td><td>UB2512141026292201</td><td>789789</td><td>Lv 1</td><td class="pn">mini pc dell 3050 i3 gen7</td><td>1</td><td>1200</td><td>7.08</td><td class="st ok"><b></b>交易完成</td><td>2025-12-14 10:26:29</td><td>2025-12-14 10:26:30</td><td>2025-12-14 10:26:30</td><td><span class="lb" style="background:#f39c12">已发放</span></td><td>-</td></tr><tr><td><i class="cb"></i></td><td><span class="xb" style="background:#18bc9c"><svg width="11" height="10" viewBox="0 0 11 10"><path d="M0 10 .9 6.7 7.3.3 10.7 3.7 4.3 9.1z" fill="currentColor"/><path d="M6.3 1.3 9.7 4.7" stroke="#18bc9c" stroke-width=".7"/><path d="M1.3 6.8 3.6 9.1" stroke="#18bc9c" stroke-width=".6" opacity=".7"/></svg></span><span class="xb" style="background:#e74c3c;margin-left:4px"><svg width="10" height="10" viewBox="0 0 10 10"><path d="M3.2 .2h3.6l.6 1.3H10v1.3H0V1.5h2.6z" fill="currentColor"/><path d="M4 .9h2l.3.6H3.7z" fill="#e74c3c"/><path d="M1 3.2h8l-.5 6.8H1.5z" fill="currentColor"/><path d="M3 4.6h1v3.9H3zM6 4.6h1v3.9H6z" fill="#e74c3c"/></svg></span></td><td>UB2512141026285708</td><td>789789</td><td>Lv 1</td><td class="pn"><div class="tr">CPU PC RAKITAN CORE I5 …</div></td><td>1</td><td>1200</td><td>7.08</td><td class="st ok"><b></b>交易完成</td><td>2025-12-14 10:26:28</td><td>2025-12-14 10:26:28</td><td>2025-12-14 10:26:28</td><td><span class="lb" style="background:#f39c12">已发放</span></td><td>-</td></tr><tr><td><i class="cb"></i></td><td><span class="xb" style="background:#18bc9c"><svg width="11" height="10" viewBox="0 0 11 10"><path d="M0 10 .9 6.7 7.3.3 10.7 3.7 4.3 9.1z" fill="currentColor"/><path d="M6.3 1.3 9.7 4.7" stroke="#18bc9c" stroke-width=".7"/><path d="M1.3 6.8 3.6 9.1" stroke="#18bc9c" stroke-width=".6" opacity=".7"/></svg></span><span class="xb" style="background:#e74c3c;margin-left:4px"><svg width="10" height="10" viewBox="0 0 10 10"><path d="M3.2 .2h3.6l.6 1.3H10v1.3H0V1.5h2.6z" fill="currentColor"/><path d="M4 .9h2l.3.6H3.7z" fill="#e74c3c"/><path d="M1 3.2h8l-.5 6.8H1.5z" fill="currentColor"/><path d="M3 4.6h1v3.9H3zM6 4.6h1v3.9H6z" fill="#e74c3c"/></svg></span></td><td>UB2512141026272186</td><td>789789</td><td>Lv 1</td><td class="pn"><div class="tr">PC MINI DELL OPTIPLEX 7…</div></td><td>1</td><td>1200</td><td>7.08</td><td class="st ok"><b></b>交易完成</td><td>2025-12-14 10:26:27</td><td>2025-12-14 10:26:27</td><td>2025-12-14 10:26:27</td><td><span class="lb" style="background:#f39c12">已发放</span></td><td>-</td></tr><tr><td><i class="cb"></i></td><td><span class="xb" style="background:#18bc9c"><svg width="11" height="10" viewBox="0 0 11 10"><path d="M0 10 .9 6.7 7.3.3 10.7 3.7 4.3 9.1z" fill="currentColor"/><path d="M6.3 1.3 9.7 4.7" stroke="#18bc9c" stroke-width=".7"/><path d="M1.3 6.8 3.6 9.1" stroke="#18bc9c" stroke-width=".6" opacity=".7"/></svg></span><span class="xb" style="background:#e74c3c;margin-left:4px"><svg width="10" height="10" viewBox="0 0 10 10"><path d="M3.2 .2h3.6l.6 1.3H10v1.3H0V1.5h2.6z" fill="currentColor"/><path d="M4 .9h2l.3.6H3.7z" fill="#e74c3c"/><path d="M1 3.2h8l-.5 6.8H1.5z" fill="currentColor"/><path d="M3 4.6h1v3.9H3zM6 4.6h1v3.9H6z" fill="#e74c3c"/></svg></span></td><td>UB2512141026267753</td><td>789789</td><td>Lv 1</td><td class="pn"><div class="tr">CPU PC RAKITAN CORE I5 …</div></td><td>1</td><td>1200</td><td>7.08</td><td class="st ok"><b></b>交易完成</td><td>2025-12-14 10:26:26</td><td>2025-12-14 10:26:26</td><td>2025-12-14 10:26:26</td><td><span class="lb" style="background:#f39c12">已发放</span></td><td>-</td></tr><tr><td><i class="cb"></i></td><td><span class="xb" style="background:#18bc9c"><svg width="11" height="10" viewBox="0 0 11 10"><path d="M0 10 .9 6.7 7.3.3 10.7 3.7 4.3 9.1z" fill="currentColor"/><path d="M6.3 1.3 9.7 4.7" stroke="#18bc9c" stroke-width=".7"/><path d="M1.3 6.8 3.6 9.1" stroke="#18bc9c" stroke-width=".6" opacity=".7"/></svg></span><span class="xb" style="background:#e74c3c;margin-left:4px"><svg width="10" height="10" viewBox="0 0 10 10"><path d="M3.2 .2h3.6l.6 1.3H10v1.3H0V1.5h2.6z" fill="currentColor"/><path d="M4 .9h2l.3.6H3.7z" fill="#e74c3c"/><path d="M1 3.2h8l-.5 6.8H1.5z" fill="currentColor"/><path d="M3 4.6h1v3.9H3zM6 4.6h1v3.9H6z" fill="#e74c3c"/></svg></span></td><td>UB2512141026246875</td><td>789789</td><td>Lv 1</td><td class="pn"><div class="tr">PC Rakitan Core i5 + Monitor…</div></td><td>1</td><td>1199</td><td>7.07</td><td class="st ok"><b></b>交易完成</td><td>2025-12-14 10:26:24</td><td>2025-12-14 10:26:25</td><td>2025-12-14 10:26:25</td><td><span class="lb" style="background:#f39c12">已发放</span></td><td>-</td></tr><tr><td><i class="cb"></i></td><td><span class="xb" style="background:#18bc9c"><svg width="11" height="10" viewBox="0 0 11 10"><path d="M0 10 .9 6.7 7.3.3 10.7 3.7 4.3 9.1z" fill="currentColor"/><path d="M6.3 1.3 9.7 4.7" stroke="#18bc9c" stroke-width=".7"/><path d="M1.3 6.8 3.6 9.1" stroke="#18bc9c" stroke-width=".6" opacity=".7"/></svg></span><span class="xb" style="background:#e74c3c;margin-left:4px"><svg width="10" height="10" viewBox="0 0 10 10"><path d="M3.2 .2h3.6l.6 1.3H10v1.3H0V1.5h2.6z" fill="currentColor"/><path d="M4 .9h2l.3.6H3.7z" fill="#e74c3c"/><path d="M1 3.2h8l-.5 6.8H1.5z" fill="currentColor"/><path d="M3 4.6h1v3.9H3zM6 4.6h1v3.9H6z" fill="#e74c3c"/></svg></span></td><td>UB2512141026239232</td><td>789789</td><td>Lv 1</td><td class="pn"><div class="tr">CPU PC RAKITAN CORE I5 …</div></td><td>1</td><td>1200</td><td>7.08</td><td class="st ok"><b></b>交易完成</td><td>2025-12-14 10:26:23</td><td>2025-12-14 10:26:24</td><td>2025-12-14 10:26:24</td><td><span class="lb" style="background:#f39c12">已发放</span></td><td>-</td></tr><tr><td><i class="cb"></i></td><td><span class="xb" style="background:#18bc9c"><svg width="11" height="10" viewBox="0 0 11 10"><path d="M0 10 .9 6.7 7.3.3 10.7 3.7 4.3 9.1z" fill="currentColor"/><path d="M6.3 1.3 9.7 4.7" stroke="#18bc9c" stroke-width=".7"/><path d="M1.3 6.8 3.6 9.1" stroke="#18bc9c" stroke-width=".6" opacity=".7"/></svg></span><span class="xb" style="background:#e74c3c;margin-left:4px"><svg width="10" height="10" viewBox="0 0 10 10"><path d="M3.2 .2h3.6l.6 1.3H10v1.3H0V1.5h2.6z" fill="currentColor"/><path d="M4 .9h2l.3.6H3.7z" fill="#e74c3c"/><path d="M1 3.2h8l-.5 6.8H1.5z" fill="currentColor"/><path d="M3 4.6h1v3.9H3zM6 4.6h1v3.9H6z" fill="#e74c3c"/></svg></span></td><td>UB2512141026229040</td><td>789789</td><td>Lv 1</td><td class="pn">mini pc dell 3050 i3 gen7</td><td>1</td><td>1200</td><td>7.08</td><td class="st ok"><b></b>交易完成</td><td>2025-12-14 10:26:22</td><td>2025-12-14 10:26:23</td><td>2025-12-14 10:26:23</td><td><span class="lb" style="background:#f39c12">已发放</span></td><td>-</td></tr><tr><td><i class="cb"></i></td><td><span class="xb" style="background:#18bc9c"><svg width="11" height="10" viewBox="0 0 11 10"><path d="M0 10 .9 6.7 7.3.3 10.7 3.7 4.3 9.1z" fill="currentColor"/><path d="M6.3 1.3 9.7 4.7" stroke="#18bc9c" stroke-width=".7"/><path d="M1.3 6.8 3.6 9.1" stroke="#18bc9c" stroke-width=".6" opacity=".7"/></svg></span><span class="xb" style="background:#e74c3c;margin-left:4px"><svg width="10" height="10" viewBox="0 0 10 10"><path d="M3.2 .2h3.6l.6 1.3H10v1.3H0V1.5h2.6z" fill="currentColor"/><path d="M4 .9h2l.3.6H3.7z" fill="#e74c3c"/><path d="M1 3.2h8l-.5 6.8H1.5z" fill="currentColor"/><path d="M3 4.6h1v3.9H3zM6 4.6h1v3.9H6z" fill="#e74c3c"/></svg></span></td><td>UB2512141026219345</td><td>789789</td><td>Lv 1</td><td class="pn"><div class="tr">Jurassic World Dino Trackers…</div></td><td>1</td><td>1169.9</td><td>6.9</td><td class="st ok"><b></b>交易完成</td><td>2025-12-14 10:26:21</td><td>2025-12-14 10:26:22</td><td>2025-12-14 10:26:22</td><td><span class="lb" style="background:#f39c12">已发放</span></td><td>-</td></tr></tbody></table><div id="ft">显示第 1 到第 15 条记录，总共 47 条记录 每页显示</div><div id="psel">15<svg width="8" height="5" viewBox="0 0 8 5" style="display:inline-block;margin-left:3px;vertical-align:1px"><path d="M0 5h8L4 .5z" fill="#333"/></svg></div><div id="ft2">条记录</div><div id="pgw" style="left:1578.2px;width:257.5px"></div><div class="pg" style="left:1578.2px;width:63.8px;border-left:none">上一页</div><div class="pg on" style="left:1642px;width:32.8px">1</div><div class="pg" style="left:1674.8px;width:32.5px">2</div><div class="pg" style="left:1707.3px;width:32.2px">3</div><div class="pg" style="left:1739.5px;width:32.0px">4</div><div class="pg" style="left:1771.5px;width:64.2px">下一页</div><div id="pin"></div><div id="pgo">跳转</div></body></html>
